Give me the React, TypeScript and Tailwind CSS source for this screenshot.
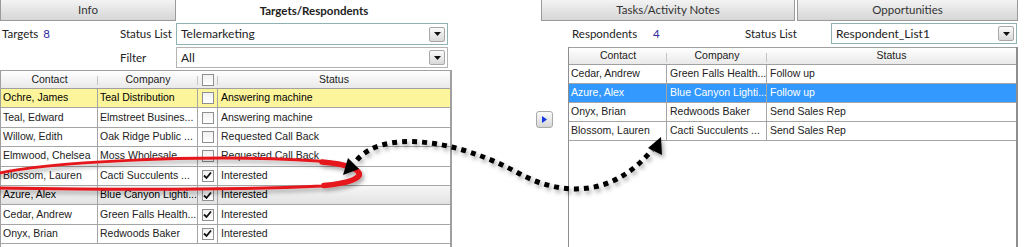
import React from "react"

type Row = { contact: string; company: string; checked?: boolean; status: string; tone?: "yellow" | "gray" | "blue" }

const targets: Row[] = [
  { contact: "Ochre, James", company: "Teal Distribution", status: "Answering machine", tone: "yellow" },
  { contact: "Teal, Edward", company: "Elmstreet Busines...", status: "Answering machine" },
  { contact: "Willow, Edith", company: "Oak Ridge Public ...", status: "Requested Call Back" },
  { contact: "Elmwood, Chelsea", company: "Moss Wholesale", status: "Requested Call Back" },
  { contact: "Blossom, Lauren", company: "Cacti Succulents ...", checked: true, status: "Interested" },
  { contact: "Azure, Alex", company: "Blue Canyon Lighti...", checked: true, status: "Interested", tone: "gray" },
  { contact: "Cedar, Andrew", company: "Green Falls Health...", checked: true, status: "Interested" },
  { contact: "Onyx, Brian", company: "Redwoods Baker", checked: true, status: "Interested" },
]

const respondents: Row[] = [
  { contact: "Cedar, Andrew", company: "Green Falls Health...", status: "Follow up" },
  { contact: "Azure, Alex", company: "Blue Canyon Lighti...", status: "Follow up", tone: "blue" },
  { contact: "Onyx, Brian", company: "Redwoods Baker", status: "Send Sales Rep" },
  { contact: "Blossom, Lauren", company: "Cacti Succulents ...", status: "Send Sales Rep" },
]

function Checkbox({ checked }: { checked?: boolean }) {
  return (
    <span className="flex h-[12px] w-[12px] items-center justify-center border border-[#8f8f8f] bg-gradient-to-b from-[#f2f2f2] to-white">
      {checked && (
        <svg width="9" height="9" viewBox="0 0 9 9">
          <path d="M1 4.5 L3.5 7 L8 1.5" fill="none" stroke="#111" strokeWidth="1.8" />
        </svg>
      )}
    </span>
  )
}

function DropButton() {
  return (
    <span className="flex h-[15px] w-[16px] items-center justify-center rounded-[2px] border border-[#a8a8a8] bg-gradient-to-b from-[#fbfbfb] to-[#d9d9d9]">
      <svg width="7" height="4" viewBox="0 0 7 4">
        <path d="M0 0 H7 L3.5 4 Z" fill="#111" />
      </svg>
    </span>
  )
}

function Select({ value, teal }: { value: string; teal?: boolean }) {
  return (
    <div
      className={
        "flex h-full flex-1 items-center justify-between border bg-white pl-[4px] pr-[2px] text-[12px] text-[#222] " +
        (teal ? "border-[#8fb3b3]" : "border-[#b4b4b4]")
      }
    >
      <span>{value}</span>
      <DropButton />
    </div>
  )
}

function Tab({ label, active, className }: { label: string; active?: boolean; className?: string }) {
  return (
    <div
      className={
        "flex h-[21px] items-center justify-center text-[11.5px] " +
        (active
          ? "bg-white font-bold text-[#222] "
          : "border border-t-0 border-[#9a9a9a] bg-gradient-to-b from-[#f3f3f3] to-[#d6d6d6] text-[#333] ") +
        (className ?? "")
      }
    >
      {label}
    </div>
  )
}

function HeaderCell({ label, w, last }: { label: React.ReactNode; w: string; last?: boolean }) {
  return (
    <div className={"relative flex h-full items-center justify-center " + w}>
      {label}
      {!last && <span className="absolute right-0 top-[5px] h-[9px] w-px bg-[#c4c4c4]" />}
    </div>
  )
}

function rowBg(tone?: Row["tone"]) {
  if (tone === "yellow") return "bg-[#fdf59c]"
  if (tone === "gray") return "bg-gradient-to-b from-[#f7f7f7] to-[#e2e2e2]"
  if (tone === "blue") return "bg-[#3399ff] text-white"
  return "bg-white text-[#222]"
}

function LeftPanel() {
  return (
    <div className="flex w-[452px] flex-col">
      <div className="flex">
        <Tab label="Info" className="w-[176px]" />
        <Tab label="Targets/Respondents" active className="flex-1" />
      </div>
      <div className="mt-[2px] flex h-[22px] items-center pr-[4px] text-[11.5px] text-[#222]">
        <div className="flex w-[120px] items-center pl-[2px]">
          <span>Targets</span>
          <span className="ml-[5px] text-[#2b2b9c]">8</span>
        </div>
        <span className="w-[56px]">Status List</span>
        <Select value="Telemarketing" teal />
      </div>
      <div className="mt-[2px] flex h-[21px] items-center pr-[4px] text-[11.5px] text-[#222]">
        <div className="w-[120px]" />
        <span className="w-[56px]">Filter</span>
        <Select value="All" />
      </div>
      <div className="mt-[2px] flex-1 border-l border-r-2 border-[#a0a0a0] font-['Liberation_Sans',Arial,sans-serif] text-[10.5px]">
        <div className="flex h-[19px] border-y border-[#a0a0a0] bg-gradient-to-b from-white to-[#e9e9e9] text-[#222]">
          <HeaderCell label="Contact" w="w-[97px]" />
          <HeaderCell label="Company" w="w-[100px]" />
          <HeaderCell label={<Checkbox />} w="w-[20px]" />
          <HeaderCell label="Status" w="flex-1" last />
        </div>
        {targets.map((r) => (
          <div key={r.contact} className={"flex h-[19.4px] border-b border-[#a5a5a5] " + rowBg(r.tone)}>
            <div className="flex w-[97px] items-center overflow-hidden whitespace-nowrap border-r border-[#a5a5a5] pl-[2px]">{r.contact}</div>
            <div className="flex w-[100px] items-center overflow-hidden whitespace-nowrap border-r border-[#a5a5a5] pl-[2px]">{r.company}</div>
            <div className="flex w-[20px] items-center justify-center border-r border-[#a5a5a5]">
              <Checkbox checked={r.checked} />
            </div>
            <div className="flex flex-1 items-center pl-[3px]">{r.status}</div>
          </div>
        ))}
      </div>
    </div>
  )
}

function RightPanel() {
  return (
    <div className="flex w-[482px] flex-col">
      <div className="flex gap-[2px] pl-[5px]">
        <Tab label="Tasks/Activity Notes" className="w-[254px]" />
        <Tab label="Opportunities" className="w-[221px]" />
      </div>
      <div className="flex flex-1">
        <div className="w-[32px]">
          <div className="mt-[90px] flex h-[17px] w-[17px] items-center justify-center rounded-[3px] border border-[#a8a8a8] bg-gradient-to-b from-[#fbfbfb] to-[#d6d6d6]">
            <svg width="5" height="7" viewBox="0 0 5 7">
              <path d="M0 0 L5 3.5 L0 7 Z" fill="#1437e0" />
            </svg>
          </div>
        </div>
        <div className="flex w-[450px] flex-col">
          <div className="mt-[2px] flex h-[21px] items-center text-[11.5px] text-[#222]">
            <span className="w-[85px] pl-[4px]">Respondents</span>
            <span className="w-[92px] text-[#2b2b9c]">4</span>
            <span className="w-[86px]">Status List</span>
            <div className="mr-[1px] flex h-full flex-1">
              <Select value="Respondent_List1" teal />
            </div>
          </div>
          <div className="mt-[3px] flex-1 border-l border-r-2 border-[#8e8e8e] font-['Liberation_Sans',Arial,sans-serif] text-[10.5px]">
            <div className="flex h-[18px] border-y border-[#a0a0a0] bg-gradient-to-b from-white to-[#e9e9e9] text-[#222]">
              <HeaderCell label="Contact" w="w-[98px]" />
              <HeaderCell label="Company" w="w-[100px]" />
              <HeaderCell label="Status" w="flex-1" last />
            </div>
            {respondents.map((r) => (
              <div key={r.contact} className={"flex h-[19px] border-b border-[#a5a5a5] " + rowBg(r.tone)}>
                <div className="flex w-[98px] items-center overflow-hidden whitespace-nowrap border-r border-[#a5a5a5] pl-[2px]">{r.contact}</div>
                <div className="flex w-[100px] items-center overflow-hidden whitespace-nowrap border-r border-[#a5a5a5] pl-[3px]">{r.company}</div>
                <div className="flex flex-1 items-center pl-[3px]">{r.status}</div>
              </div>
            ))}
          </div>
        </div>
      </div>
    </div>
  )
}

export default function App() {
  return (
    <div className="relative flex h-[247px] w-[1024px] overflow-hidden bg-white font-['Lato',sans-serif]">
      <LeftPanel />
      <div className="w-[84px]" />
      <RightPanel />

      {/* annotation: red loop round the row, dotted arrow to the copy on the right */}
      <svg className="pointer-events-none absolute inset-0" width="1024" height="247" viewBox="0 0 1024 247">
        <defs>
          <filter id="sh" x="-10%" y="-50%" width="120%" height="200%">
            <feDropShadow dx="2" dy="3" stdDeviation="2" floodOpacity="0.35" />
          </filter>
        </defs>
        <g filter="url(#sh)">
          <path
            d="M-5 174 C40 163 200 153 318 161 C370 165 378 182 322 186 C220 191 60 189 -5 188"
            fill="none"
            stroke="#e5161b"
            strokeWidth="3"
          />
          <path d="M322 162 C368 166 374 181 324 185.5" fill="none" stroke="#e5161b" strokeWidth="5.5" strokeLinecap="round" />
          <path
            d="M357 160 C382 130 455 138 520 174 C562 196 612 198 652 150"
            fill="none"
            stroke="#000"
            strokeWidth="5"
            strokeDasharray="5 5"
          />
          <polygon points="343,175 348,158 359,169" fill="#000" />
          <polygon points="661,137 648,148 662,155" fill="#000" />
        </g>
      </svg>
    </div>
  )
}
